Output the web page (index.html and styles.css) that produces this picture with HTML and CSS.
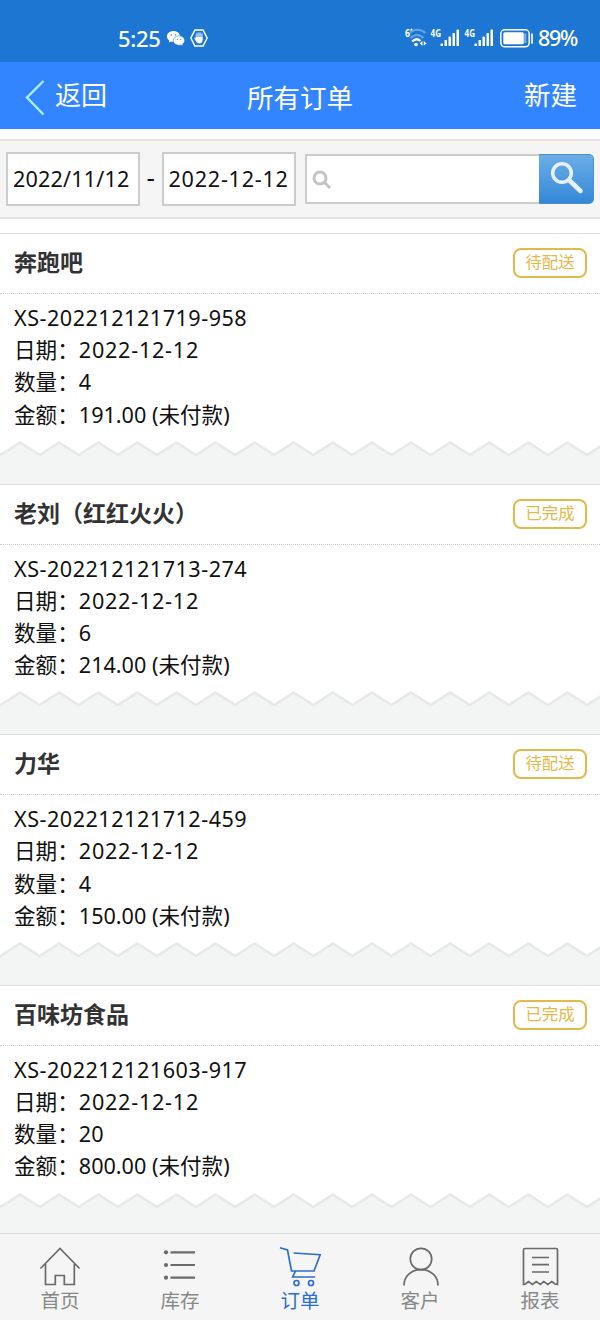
FILE: index.html
```html
<!DOCTYPE html>
<html lang="zh-CN">
<head>
  <meta charset="UTF-8" />
  <meta name="viewport" content="width=device-width, initial-scale=1" />
  <title>所有订单</title>
  <link rel="stylesheet" href="styles.css">
</head>
<body>
  <!-- torn paper edge, shared by all orders -->
  <svg class="defs" width="0" height="0">
    <defs>
      <pattern id="teeth" x="0.5" y="0" width="39.1" height="42" patternUnits="userSpaceOnUse">
        <path d="M-1 14.6L0 14L19.5 1.5L39.1 14L40 14.6V42H-1z" fill="#f3f5f5" />
        <path d="M-19.5 1.5L0 14L19.5 1.5L39.1 14L58.6 1.5" fill="none" stroke="#e7e9e9" stroke-width="2.6" />
      </pattern>
      <symbol id="torn" viewBox="0 0 600 42">
        <rect width="600" height="42" fill="url(#teeth)" />
      </symbol>
    </defs>
  </svg>

  <div class="status-bar">
    <div class="status-left">
      <span class="clock">5:25</span>
      <svg class="wechat" width="18" height="15" viewBox="0 0 18 15">
        <path d="M6.5 0C2.9 0 0 2.4 0 5.4c0 1.7.9 3.1 2.3 4.1L1.8 11.6l2.2-1.2c.8.3 1.6.4 2.5.4 3.6 0 6.5-2.4 6.5-5.4S10.1 0 6.5 0z" fill="#fff" />
        <path d="M12 4.8c-3.2 0-5.7 2.1-5.7 4.7s2.5 4.7 5.7 4.7c.7 0 1.4-.1 2-.3l2 1-.4-1.8c1.2-.9 2-2.2 2-3.6 0-2.6-2.5-4.7-5.6-4.7z" fill="#fff" stroke="#1c76d2" stroke-width=".5" />
        <circle cx="4.3" cy="3.9" r=".7" fill="#1c76d2" /><circle cx="8.5" cy="3.9" r=".7" fill="#1c76d2" />
        <circle cx="10.3" cy="8.3" r=".6" fill="#1c76d2" /><circle cx="13.8" cy="8.3" r=".6" fill="#1c76d2" />
      </svg>
      <svg class="hand" width="18" height="18" viewBox="0 0 18 18">
        <path d="M5 .9h8L17.2 9 13 17.1H5L.8 9z" fill="none" stroke="#fff" stroke-width="1.5" stroke-linejoin="round" />
        <path d="M6.5 5v5M8.3 4v6M10.1 4v6M11.9 5.2v5" stroke="#9cc8f2" stroke-width="1.7" stroke-linecap="round" />
        <path d="M4.2 8.7c.8-.3 1.2.3 1.7 1V8h6.6v3.2c0 2-1 3.2-3.2 3.2-2.4 0-3.6-2-5.1-5.7z" fill="#fff" />
      </svg>
    </div>
    <div class="status-right">
      <svg width="93" height="32" viewBox="-1 -6 93 32">
        <g class="net-label">
          <text x="0" y="8.5" textLength="5" lengthAdjust="spacingAndGlyphs">6</text>
          <text x="25.5" y="8.5" textLength="10.5" lengthAdjust="spacingAndGlyphs">4G</text>
          <text x="59.5" y="8.5" textLength="10.5" lengthAdjust="spacingAndGlyphs">4G</text>
        </g>
        <path d="M5 2h3M6.5 .5v3" stroke="#fff" stroke-width="1" />
        <g fill="none" stroke-width="2">
          <path d="M4.5 5C9 .5 16 .8 20.5 5" stroke="#62a5e6" />
          <path d="M5.5 10.2C9 6 15 6 18.5 10.2" stroke="#62a5e6" />
          <path d="M7.2 13.5C10 10.6 13 10.6 15.5 13" stroke="#fff" stroke-width="2.4" />
        </g>
        <circle cx="11" cy="16.5" r="1.8" fill="#fff" />
        <path d="M17.5 13v4.8l-2.7-2.4zM18.8 13v4.8l2.7-2.4z" fill="#fff" />
        <g id="bars" fill="#fff">
          <rect x="35.5" y="15.5" width="2.5" height="2.5" rx=".6" />
          <rect x="39.5" y="12" width="2.5" height="6" rx=".6" />
          <rect x="43.5" y="8.6" width="2.5" height="9.4" rx=".6" />
          <rect x="47.5" y="5" width="2.5" height="13" rx=".6" />
          <rect x="51.5" y="1.5" width="2.5" height="16.5" rx=".6" />
        </g>
        <use href="#bars" x="34" />
      </svg>
      <svg class="battery" width="34" height="19" viewBox="0 0 34 19">
        <rect x=".8" y=".8" width="28.4" height="17" rx="4" fill="none" stroke="#fff" stroke-width="1.5" />
        <rect x="3.3" y="3.3" width="20.5" height="12" rx="1.5" fill="#fff" />
        <path d="M24.2 4.5h2v9.6h-2z" fill="#78b3ec" />
        <path d="M32 5v9" stroke="#fff" stroke-width="1.7" stroke-linecap="round" />
      </svg>
      <span class="percent">89%</span>
    </div>
  </div>

  <header class="title-bar">
    <a class="back">
      <svg width="20" height="36" viewBox="0 0 20 36">
        <path d="M18.5 1L2 17.5l16.5 17" fill="none" stroke="#a9f0ff" stroke-width="2.4" />
      </svg>
      <span>返回</span>
    </a>
    <h1>所有订单</h1>
    <a class="create">新建</a>
  </header>

  <div class="filter">
    <div class="date">2022/11/12</div>
    <span class="dash">-</span>
    <div class="date date-to">2022-12-12</div>
    <div class="search">
      <div class="search-input">
        <svg width="20" height="20" viewBox="0 0 20 20" fill="none" stroke="#c4c4c4">
          <circle cx="8" cy="8" r="6" stroke-width="3" />
          <path d="M12.5 12.5L18 18" stroke-width="3" />
        </svg>
      </div>
      <div class="search-btn">
        <svg width="34" height="34" viewBox="0 0 34 34" fill="none" stroke="#e6f0fc" stroke-linecap="round">
          <circle cx="12" cy="12" r="9.3" stroke-width="3.6" />
          <path d="M19.5 19.5L30.5 30" stroke-width="4.6" />
        </svg>
      </div>
    </div>
  </div>

  <main class="orders">
    <section class="order">
      <div class="order-head"><h2>奔跑吧</h2><span class="tag">待配送</span></div>
      <div class="order-body">
        <p class="num">XS-202212121719-958</p>
        <p>日期：<span class="day">2022-12-12</span></p>
        <p>数量：4</p>
        <p>金额：191.00 (未付款)</p>
      </div>
      <svg class="torn"><use href="#torn" /></svg>
    </section>
    <section class="order">
      <div class="order-head"><h2>老刘（红红火火）</h2><span class="tag">已完成</span></div>
      <div class="order-body">
        <p class="num">XS-202212121713-274</p>
        <p>日期：<span class="day">2022-12-12</span></p>
        <p>数量：6</p>
        <p>金额：214.00 (未付款)</p>
      </div>
      <svg class="torn"><use href="#torn" /></svg>
    </section>
    <section class="order">
      <div class="order-head"><h2>力华</h2><span class="tag">待配送</span></div>
      <div class="order-body">
        <p class="num">XS-202212121712-459</p>
        <p>日期：<span class="day">2022-12-12</span></p>
        <p>数量：4</p>
        <p>金额：150.00 (未付款)</p>
      </div>
      <svg class="torn"><use href="#torn" /></svg>
    </section>
    <section class="order">
      <div class="order-head"><h2>百味坊食品</h2><span class="tag">已完成</span></div>
      <div class="order-body">
        <p class="num">XS-202212121603-917</p>
        <p>日期：<span class="day">2022-12-12</span></p>
        <p>数量：20</p>
        <p>金额：800.00 (未付款)</p>
      </div>
      <svg class="torn"><use href="#torn" /></svg>
    </section>
  </main>

  <nav class="tabs">
    <a class="tab">
      <svg width="42" height="40" viewBox="0 0 42 40">
        <path d="M1.5 21.5L21 1.5l19.5 20M6.5 17v20.5h9.8V28.5h9V37.5h10V17" />
      </svg>
      <span>首页</span>
    </a>
    <a class="tab">
      <svg width="42" height="40" viewBox="0 0 42 40">
        <path d="M11.5 5.3H36M11.5 18H36M11.5 30.7H36" stroke-width="2.2" />
        <g class="dots"><circle cx="7" cy="5.3" r="2.1" /><circle cx="7" cy="18" r="2.1" /><circle cx="7" cy="30.7" r="2.1" /></g>
      </svg>
      <span>库存</span>
    </a>
    <a class="tab active">
      <svg width="42" height="40" viewBox="0 0 42 40">
        <path d="M1 .8l7.500 2.200 4 21h22.500l6.200-16.300L14.500 6M16.500 24l-2.800 6h22.500" />
        <circle cx="17.500" cy="36" r="2.500" /><circle cx="32" cy="36" r="2.500" />
      </svg>
      <span>订单</span>
    </a>
    <a class="tab">
      <svg width="42" height="40" viewBox="0 0 42 40">
        <circle cx="22" cy="12" r="10.7" />
        <path d="M5 38.5c0-9 7-15.800 17-15.800s17 6.800 17 15.800" />
      </svg>
      <span>客户</span>
    </a>
    <a class="tab">
      <svg width="42" height="40" viewBox="0 0 42 40">
        <path d="M4.500 37.500V3q0-1.500 1.500-1.500h31q1.500 0 1.500 1.500v34.500l-2.500-.5-3.200-2.500-4 3-4-3-3.500 3-4-3-3.800 3-4-3L6.500 37zM13 10.500h17M13 17.700h17M13 25h17" />
      </svg>
      <span>报表</span>
    </a>
  </nav>
</body>
</html>
```
FILE: styles.css
```css
* {
  box-sizing: border-box;
}
body {
  margin: 0;
  height: 1320px;
  display: flex;
  flex-direction: column;
  overflow: hidden;
  background: #fff;
  color: #111;
  font-family: "Noto Sans", "Noto Sans CJK SC", sans-serif;
}
h1, h2, p {
  margin: 0;
}
svg {
  display: block;
  flex: none;
}
.defs {
  position: absolute;
}

/* status bar */
.status-bar {
  flex: none;
  height: 62px;
  padding: 14px 23px 0 118px;
  display: flex;
  justify-content: space-between;
  align-items: center;
  background: #1c76d2;
  color: #fff;
}
.status-left, .status-right {
  display: flex;
  align-items: center;
}
.clock, .percent {
  font-size: 22px;
  font-weight: 500;
  line-height: 24px;
}
.clock {
  width: 43px;
  letter-spacing: -0.3px;
}
.wechat {
  margin-left: 6px;
}
.hand {
  margin-left: 5px;
}
.net-label {
  font-size: 10.5px;
  font-weight: 700;
  fill: #fff;
}
.battery {
  margin-left: 3px;
}
.percent {
  width: 39px;
  margin-left: 4px;
  font-size: 21.5px;
  letter-spacing: -1.3px;
}

/* title */
.title-bar {
  flex: none;
  height: 67px;
  padding: 0 23px 0 25px;
  display: grid;
  grid-template-columns: 1fr auto 1fr;
  align-items: center;
  background: #3385ff;
  color: #fff;
  font-size: 26.5px;
  line-height: 32px;
}
.title-bar h1 {
  font-size: 26.5px;
  font-weight: 400;
  padding-top: 5px;
  margin-left: -2px;
}
.back {
  display: flex;
  align-items: center;
  gap: 10px;
  font-size: 26px;
}
.back svg {
  margin-top: 4px;
}
.back span {
  margin-top: -1px;
}
.create {
  text-align: right;
  margin-top: -1px;
}

/* date range and search */
.filter {
  flex: none;
  height: 80px;
  margin-top: 10px;
  padding: 0 6px;
  display: flex;
  align-items: center;
  background: #f5f5f5;
  border-top: 2px solid #e9e0e6;
  border-bottom: 2px solid #e3e3e3;
}
.date {
  width: 134px;
  height: 54px;
  padding-left: 5px;
  border: 2px solid #ccc;
  background: #fff;
  font-size: 21.6px;
  line-height: 50px;
  letter-spacing: 0.15px;
  white-space: nowrap;
}
.date-to {
  letter-spacing: 0.75px;
}
.dash {
  width: 21.5px;
  text-align: center;
  font-size: 26px;
  line-height: 50px;
  margin-top: -5px;
}
.search {
  flex: 1;
  margin-left: 9px;
  display: flex;
}
.search-input {
  flex: 1;
  height: 50px;
  padding: 2px 0 0 5px;
  display: flex;
  align-items: center;
  border: 2px solid #ccc;
  border-right: 0;
  background: #fff;
}
.search-btn {
  width: 55px;
  height: 50px;
  padding: 6px 0 0 11px;
  border-radius: 0 5px 5px 0;
  border: 1px solid #478fd4;
  border-left: 0;
  background: linear-gradient(#6cade6, #3388d8);
}

/* orders */
.orders {
  flex: 1;
  min-height: 0;
  margin-top: 14px;
  overflow: hidden;
}
.order {
  height: 250.6px;
  border-top: 1px solid #ddd;
  display: flex;
  flex-direction: column;
}
.order:not(:last-child) {
  background: linear-gradient(#fff 230px, #f3f5f5 230px);
}
.order-head {
  flex: none;
  height: 60px;
  padding: 0 13px 1px 14px;
  display: flex;
  justify-content: space-between;
  align-items: center;
  border-bottom: 1px dotted #ccc;
}
.order-head h2 {
  font-size: 23px;
  font-weight: 700;
  line-height: 30px;
  margin-top: -2px;
  color: #333;
}
.tag {
  width: 74px;
  height: 30px;
  border: 2px solid #e2b94a;
  border-radius: 8px;
  color: #e2b94a;
  font-size: 16.4px;
  line-height: 24px;
  text-align: center;
}
.order-body {
  flex: none;
  padding: 8px 14px 0;
  font-size: 21.6px;
  line-height: 32.2px;
}
.num {
  letter-spacing: 0.5px;
}
.day {
  letter-spacing: 0.75px;
}
.torn {
  width: 600px;
  height: 42px;
  margin-top: 10px;
}

/* bottom tabs */
.tabs {
  flex: none;
  height: 87px;
  display: flex;
  background: #f5f5f5;
  border-top: 1px solid #d9dcdc;
}
.tab {
  flex: 1;
  padding-top: 13px;
  display: flex;
  flex-direction: column;
  align-items: center;
  color: #888;
  font-size: 19.5px;
  line-height: 27px;
}
.tab svg {
  fill: none;
  stroke: #6a6a6a;
  stroke-width: 1.7;
}
.tab .dots {
  fill: #6a6a6a;
  stroke: none;
}
.tab.active {
  color: #2d6cd0;
}
.tab.active svg {
  stroke: #2d6cd0;
}
```
